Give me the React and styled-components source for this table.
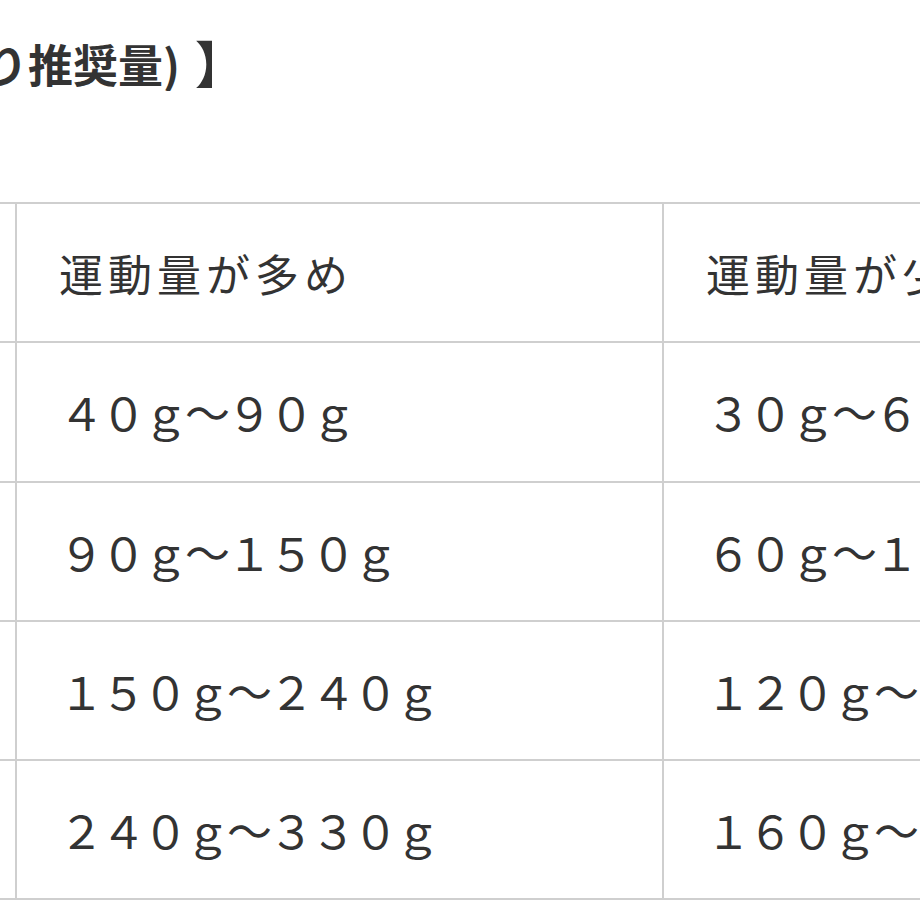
import styled, { createGlobalStyle } from "styled-components";

const GlobalStyle = createGlobalStyle`
  html, body {
    margin: 0;
    padding: 0;
    background: #fff;
    overflow: hidden;
  }
  body {
    width: 920px;
    height: 920px;
    font-family: "Noto Sans CJK JP", "Noto Sans", sans-serif;
    color: #333;
  }
`;

const rows = [
  ["４０ｇ～９０ｇ", "３０ｇ～６０ｇ"],
  ["９０ｇ～１５０ｇ", "６０ｇ～１２０ｇ"],
  ["１５０ｇ～２４０ｇ", "１２０ｇ～１６０ｇ"],
  ["２４０ｇ～３３０ｇ", "１６０ｇ～２４０ｇ"],
];

const App = () => {
  return (
    <Page>
      <GlobalStyle />
      <HeadingClip>
        <Heading>
          【1日あたり推奨量)<Bracket>】</Bracket>
        </Heading>
      </HeadingClip>
      <Table>
        <colgroup>
          <col style={{ width: 16 }} />
          <col style={{ width: 647 }} />
          <col style={{ width: 647 }} />
        </colgroup>
        <thead>
          <tr>
            <Cell />
            <Cell head>運動量が多め</Cell>
            <Cell head>運動量が少なめ</Cell>
          </tr>
        </thead>
        <tbody>
          {rows.map((r, i) => (
            <tr key={i}>
              <Cell />
              <Cell>{r[0]}</Cell>
              <Cell>{r[1]}</Cell>
            </tr>
          ))}
        </tbody>
      </Table>
    </Page>
  );
};

export default App;

const Page = styled.div`
  width: 920px;
  height: 920px;
  overflow: hidden;
  padding-top: 31px;
  box-sizing: border-box;
`;

const HeadingClip = styled.div`
  width: 245px;
  height: 60px;
  display: flex;
  justify-content: flex-end;
  overflow: hidden;
`;

const Heading = styled.h2`
  margin: 0;
  flex-shrink: 0;
  white-space: nowrap;
  font-size: 45px;
  font-weight: 700;
  line-height: 60px;
  letter-spacing: 0;
  color: #333;
`;

const Bracket = styled.span`
  display: inline-block;
  margin-left: 15px;
  font-size: 50px;
`;

const Table = styled.table`
  margin-top: 111px;
  border-collapse: collapse;
  table-layout: fixed;
  width: 1310px;
`;

const Cell = styled.td`
  border: 2px solid #cfcfcf;
  height: 139.3px;
  padding: 0 0 0 42px;
  box-sizing: border-box;
  vertical-align: middle;
  white-space: nowrap;
  font-size: ${({ head }) => (head ? "44px" : "45px")};
  letter-spacing: ${({ head }) => (head ? "5px" : "-3px")};
  font-weight: 400;
  color: #333;
  &:first-child {
    padding: 0;
    border-left: none;
  }
`;
